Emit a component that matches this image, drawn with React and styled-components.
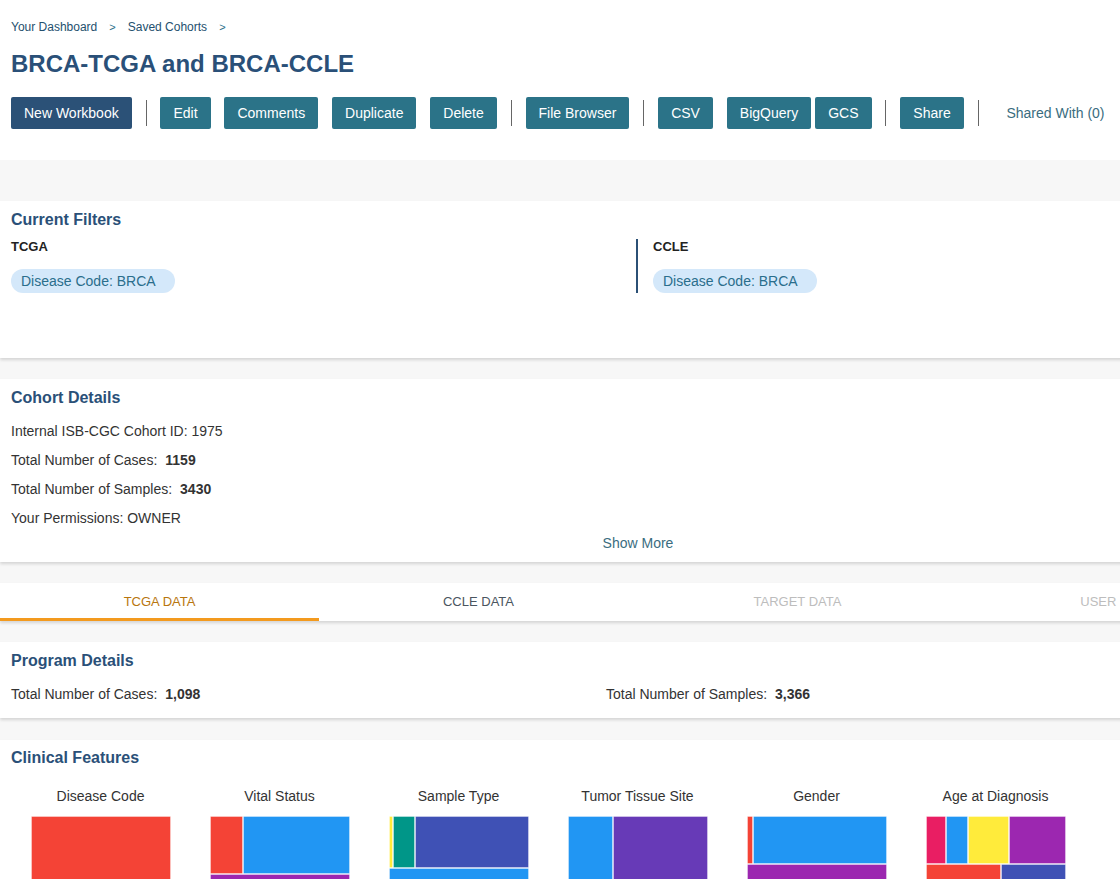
import React from "react";
import styled, { createGlobalStyle } from "styled-components";

const GlobalStyle = createGlobalStyle`
  html, body {
    margin: 0;
    padding: 0;
    overflow: hidden;
    background: #f7f7f7;
    font-family: "Liberation Sans", Arial, sans-serif;
    color: #333;
  }
  * { box-sizing: border-box; }
`;

const Page = styled.div`
  width: 1276px;
  background: #f7f7f7;
  padding-bottom: 40px;
`;

const Header = styled.header`
  background: #fff;
  height: 160px;
  padding: 19px 11px 0;
  margin-bottom: 41px;
`;

const Breadcrumb = styled.nav`
  display: flex;
  align-items: center;
  gap: 12px;
  font-size: 12px;
  line-height: 16px;
  color: #24506e;
`;

const Crumb = styled.span`
  color: ${(p) => (p.$sep ? "#2a6e88" : "#24506e")};
  font-size: ${(p) => (p.$sep ? "11px" : "12px")};
`;

const Title = styled.h1`
  margin: 15px 0 0;
  font-size: 24px;
  line-height: 28px;
  font-weight: 700;
  color: #2a5078;
`;

const Toolbar = styled.div`
  display: flex;
  align-items: center;
  gap: 13.9px;
  margin-top: 19px;
`;

const Group = styled.div`
  display: flex;
  gap: 4px;
`;

const Button = styled.button`
  height: 32px;
  padding: 0 13px;
  border: none;
  border-radius: 2px;
  background: ${(p) => (p.$primary ? "#2b5177" : "#2b7388")};
  color: #fff;
  font-family: "Liberation Sans", Arial, sans-serif;
  font-size: 14px;
  cursor: pointer;
`;

const Sep = styled.span`
  width: 1px;
  height: 26px;
  background: #666;
`;

const LinkText = styled.span`
  font-size: 14px;
  color: #3a6d80;
  margin-left: 14px;
`;

const Panel = styled.section`
  background: #fff;
  box-shadow: 0 2px 3px rgba(0, 0, 0, 0.14);
  padding: ${(p) => p.$pad || "9px 11px 9px"};
  margin-bottom: ${(p) => p.$mb || "21px"};
`;

const Heading = styled.h2`
  margin: 0;
  font-size: 16px;
  line-height: 20px;
  font-weight: 700;
  color: #2a5078;
`;

const FilterGrid = styled.div`
  display: grid;
  grid-template-columns: 625px 1fr;
  margin-top: 9px;
`;

const FilterCol = styled.div`
  ${(p) =>
    p.$divider &&
    `
    border-left: 2px solid #2b5075;
    padding-left: 15px;
  `}
`;

const ProgLabel = styled.div`
  font-size: 13px;
  line-height: 16px;
  font-weight: 700;
  color: #222;
`;

const Pill = styled.span`
  display: inline-flex;
  align-items: center;
  height: 24px;
  margin-top: 14px;
  padding: 0 19px 0 10px;
  border-radius: 12px;
  background: #d4e8fa;
  color: #2a6e8c;
  font-size: 14px;
`;

const DetailList = styled.div`
  margin-top: 8.5px;
`;

const DetailRow = styled.div`
  font-size: 14px;
  line-height: 29px;
  color: #333;
`;

const Value = styled.b`
  font-weight: 700;
  color: #333;
  margin-left: 8px;
`;

const ShowMore = styled.div`
  text-align: center;
  font-size: 14px;
  line-height: 20px;
  color: #3a6d80;
`;

const Tabs = styled.div`
  display: grid;
  grid-template-columns: repeat(4, 1fr);
  background: #fff;
  box-shadow: 0 2px 3px rgba(0, 0, 0, 0.14);
  margin-bottom: 21px;
`;

const Tab = styled.div`
  height: 38px;
  display: flex;
  align-items: center;
  justify-content: center;
  font-size: 13px;
  text-transform: uppercase;
  color: ${(p) =>
    p.$active ? "#b8760e" : p.$disabled ? "#bdbdbd" : "#4a5560"};
  border-bottom: 3px solid ${(p) => (p.$active ? "#f39a1e" : "transparent")};
  padding-top: 3px;
`;

const StatGrid = styled.div`
  display: grid;
  grid-template-columns: 595px 1fr;
  margin-top: 13px;
  font-size: 14px;
  line-height: 20px;
`;

const Charts = styled.div`
  display: flex;
  margin-top: 18px;
`;

const ChartCell = styled.div`
  width: 179px;
  display: flex;
  flex-direction: column;
  align-items: center;
`;

const ChartTitle = styled.div`
  font-size: 14px;
  line-height: 20px;
  color: #333;
  margin-bottom: 10px;
`;

const C = {
  red: "#f44336",
  blue: "#2196f3",
  purple: "#9c27b0",
  deep: "#673ab7",
  indigo: "#3f51b5",
  teal: "#009688",
  yellow: "#ffeb3b",
  pink: "#e91e63",
};

const charts = [
  { title: "Disease Code", rects: [[0, 0, 140, 140, C.red]] },
  {
    title: "Vital Status",
    rects: [
      [0, 0, 33, 58, C.red],
      [33, 0, 107, 58, C.blue],
      [0, 58, 140, 82, C.purple],
    ],
  },
  {
    title: "Sample Type",
    rects: [
      [0, 0, 4, 52, C.yellow],
      [4, 0, 22, 52, C.teal],
      [26, 0, 114, 52, C.indigo],
      [0, 52, 140, 88, C.blue],
    ],
  },
  {
    title: "Tumor Tissue Site",
    rects: [
      [0, 0, 45, 140, C.blue],
      [45, 0, 95, 140, C.deep],
    ],
  },
  {
    title: "Gender",
    rects: [
      [0, 0, 6, 48, C.red],
      [6, 0, 134, 48, C.blue],
      [0, 48, 140, 92, C.purple],
    ],
  },
  {
    title: "Age at Diagnosis",
    rects: [
      [0, 0, 20, 48, C.pink],
      [20, 0, 22, 48, C.blue],
      [42, 0, 41, 48, C.yellow],
      [83, 0, 57, 48, C.purple],
      [0, 48, 75, 92, C.red],
      [75, 48, 65, 92, C.indigo],
    ],
  },
];

function Treemap({ rects }) {
  return (
    <svg width="140" height="140" viewBox="0 0 140 140">
      {rects.map(([x, y, w, h, fill], i) => (
        <rect
          key={i}
          x={x + 0.5}
          y={y + 0.5}
          width={w - 1}
          height={h - 1}
          fill={fill}
          stroke="rgba(255,255,255,0.35)"
          strokeWidth="1"
        />
      ))}
    </svg>
  );
}

export default function App() {
  return (
    <>
      <GlobalStyle />
      <Page>
        <Header>
          <Breadcrumb>
            <Crumb>Your Dashboard</Crumb>
            <Crumb $sep>&gt;</Crumb>
            <Crumb>Saved Cohorts</Crumb>
            <Crumb $sep>&gt;</Crumb>
          </Breadcrumb>
          <Title>BRCA-TCGA and BRCA-CCLE</Title>
          <Toolbar>
            <Button $primary>New Workbook</Button>
            <Sep />
            <Button>Edit</Button>
            <Button>Comments</Button>
            <Button>Duplicate</Button>
            <Button>Delete</Button>
            <Sep />
            <Button>File Browser</Button>
            <Sep />
            <Button>CSV</Button>
            <Group>
              <Button>BigQuery</Button>
              <Button>GCS</Button>
            </Group>
            <Sep />
            <Button>Share</Button>
            <Sep />
            <LinkText>Shared With (0)</LinkText>
          </Toolbar>
        </Header>

        <Panel $pad="9px 11px 65px">
          <Heading>Current Filters</Heading>
          <FilterGrid>
            <FilterCol>
              <ProgLabel>TCGA</ProgLabel>
              <Pill>Disease Code: BRCA</Pill>
            </FilterCol>
            <FilterCol $divider>
              <ProgLabel>CCLE</ProgLabel>
              <Pill>Disease Code: BRCA</Pill>
            </FilterCol>
          </FilterGrid>
        </Panel>

        <Panel $pad="9px 11px 9px">
          <Heading>Cohort Details</Heading>
          <DetailList>
            <DetailRow>Internal ISB-CGC Cohort ID: 1975</DetailRow>
            <DetailRow>
              Total Number of Cases:<Value>1159</Value>
            </DetailRow>
            <DetailRow>
              Total Number of Samples:<Value>3430</Value>
            </DetailRow>
            <DetailRow>Your Permissions: OWNER</DetailRow>
          </DetailList>
          <ShowMore>Show More</ShowMore>
        </Panel>

        <Tabs>
          <Tab $active>TCGA Data</Tab>
          <Tab>CCLE Data</Tab>
          <Tab $disabled>Target Data</Tab>
          <Tab $disabled>User Data</Tab>
        </Tabs>

        <Panel $pad="9px 11px 14px" $mb="22px">
          <Heading>Program Details</Heading>
          <StatGrid>
            <div>
              Total Number of Cases:<Value>1,098</Value>
            </div>
            <div>
              Total Number of Samples:<Value>3,366</Value>
            </div>
          </StatGrid>
        </Panel>

        <Panel $pad="8px 11px 20px">
          <Heading>Clinical Features</Heading>
          <Charts>
            {charts.map((c) => (
              <ChartCell key={c.title}>
                <ChartTitle>{c.title}</ChartTitle>
                <Treemap rects={c.rects} />
              </ChartCell>
            ))}
          </Charts>
        </Panel>
      </Page>
    </>
  );
}
